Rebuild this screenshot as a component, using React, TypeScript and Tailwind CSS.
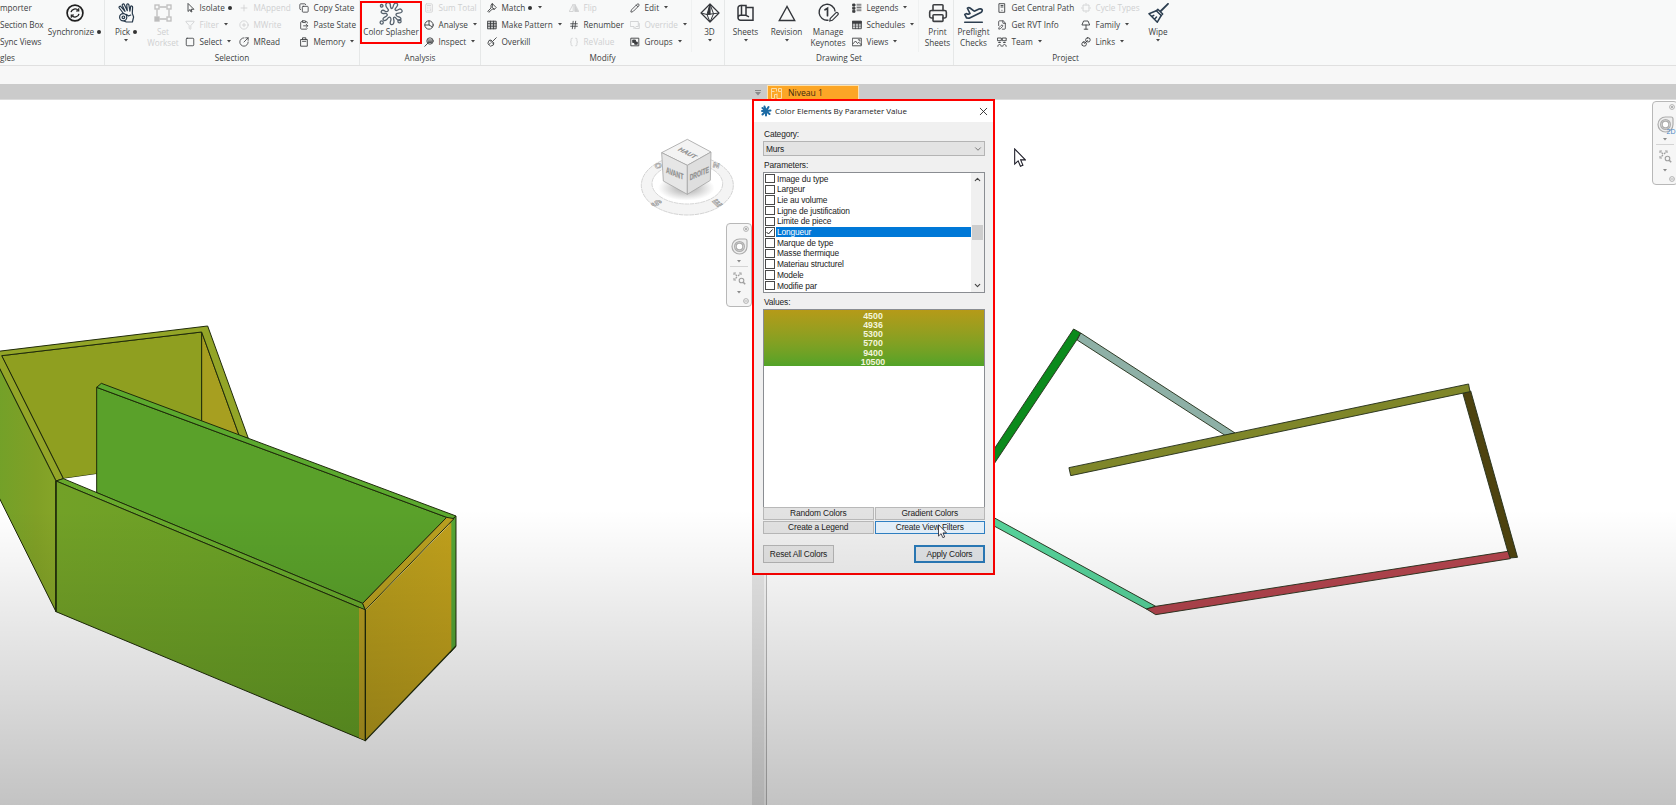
import React from "react";
import {
  Braces, Calculator, ClipboardPaste, Copy, Hash, Pencil, PlaneTakeoff, Plus, CirclePlus,
  CircleArrowOutUpRight, Filter, Square, Printer, FilePen, X, ChevronDown, ChevronUp,
} from "lucide-react";

type IconType = React.ComponentType<{ size?: number; strokeWidth?: number; className?: string }>;

/* Builds a 10px line icon that takes the same props as the lucide ones. */
const mini = (content: React.ReactNode): IconType =>
  function MiniIcon({ size = 10, className }) {
    return (
      <svg width={size} height={size} viewBox="0 0 10 10" fill="none" stroke="currentColor" strokeWidth=".9" strokeLinejoin="round" strokeLinecap="round" className={className}>
        {content}
      </svg>
    );
  };

const ArrowCursor = mini(<path d="M3 .8v7.700l2-1.900 1 2.400 1-.4-1-2.300h2.500z" />);
const MemoryIcon = mini(<><path d="M2 2.500h6.300v6.700H2zM3.500 2.500V.8h3.300v1.700" /><path d="M3.500 4.300h3.300" /></>);
const PieIcon = mini(<><circle cx="5" cy="5" r="4.200" /><path d="M5 .8V5l3.600 2M5 5H.8" /></>);
const InspectIcon = mini(<><circle cx="6" cy="4" r="3.200" /><path d="M3.700 6.300.8 9.300M4 3h4M4 4.300h4M4 5.500h3.500" /></>);
const MatchIcon = mini(<path d="M5.500.8 9.200 4.500 7.500 6.200H5.200L1.800 9.300.8 8.300 4 5V2.500zM5.500.8l-.3 3.700 2.300 1.700" />);
const PatternIcon = mini(<><path d="M.8 1.200h8.400v7.600H.8z" fill="currentColor" fillOpacity=".25" /><path d="M.8 3.700h8.400M.8 6.200h8.400M3.500 1.200v7.600M6.500 1.200v7.600" /></>);
const OverkillIcon = mini(<path d="M9.300.7 6.300 3.700M4.300 3.300l2.500 2.500-.5 2.300-2.800 1.100L.8 6.500 1.900 3.800zM2 7.500l1.500-1.500M3 3.500l3.300 3.300" />);
const FlipIcon = mini(<><path d="M4.200 1.500v7H.6z" /><path d="M5.800 1.500v7h3.600z" fill="currentColor" /></>);
const OverrideIcon = mini(<path d="M.7 1.500h7.600v5H6L4 8.700V6.500H.7zM5.500 8.500h3.800V3.500" />);
const GroupsIcon = mini(<><path d="M1.200 1.200h7.600v7.600H1.200z" /><path d="M3 3h2.500v2.500H3zM5 5h2.300v2.300H5z" fill="currentColor" /></>);
const LegendIcon = mini(<><path d="M1 1h2v2H1zM1 4.200h2v2H1zM1 7.300h2v2H1z" fill="currentColor" /><path d="M5 1.300h4M5 2.900h4M5 4.500h4M5 6.100h4M5 7.700h4" strokeWidth=".7" /></>);
const ScheduleIcon = mini(<><path d="M.7 1.300h8.600v7.400H.7z" /><path d="M.7 1.300h8.600v2H.7z" fill="currentColor" /><path d="M.7 5h8.600M.7 6.800h8.600M3.500 3v5.700M6.500 3v5.700" strokeWidth=".7" /></>);
const ViewsIcon = mini(<path d="M.7 1.200h8.600v7.600H.7zM.7 7l2.800-3 2 2.500 1.300-1.200 2.500 2.500M6.300 2.800h1.500v1.200" />);
const ServerIcon = mini(<path d="M2.300.7h5.400v8.600H2.300zM4 2.500h2M4 4h2M4.900 7.300h.1" />);
const TeamIcon = mini(<path d="M.8 1h3.500v2.700H.8zM5.700 1h3.500v2.700H5.700zM2.500 5.200v0M7.500 5.200v0M.8 9.300c0-2.600 3.500-2.600 3.500 0M5.700 9.300c0-2.600 3.500-2.600 3.500 0M1.600 5.500h1.800M6.500 5.500h1.800" />);
const CycleIcon = mini(<path d="M2 4V2h2M6 2h2v2M8 6v2H6M4 8H2V6M5 .5v2M5 7.500v2M.5 5h2M7.500 5h2" />);
const FamilyIcon = mini(<path d="M3 1h4l1.700 4H1.300zM5 5v4M3.200 9.200h3.600" />);
const LinkIcon = mini(<><rect x="4.700" y=".9" width="4.400" height="4" rx="1.700" transform="rotate(8 7 3)" /><rect x=".9" y="5" width="4.400" height="4" rx="1.700" transform="rotate(8 3 7)" /><path d="m3.500 6.500 3-3" /></>);

const Caret = ({ className = "" }: { className?: string }) => (
  <svg width="4" height="3" viewBox="0 0 4 3" className={`shrink-0 ${className}`}>
    <path d="M0 0h4L2 2.6z" fill="#444" />
  </svg>
);

const Dot = () => <span className="size-[4px] shrink-0 rounded-full bg-[#333]" />;

interface RowProps {
  icon: IconType;
  text: string;
  off?: boolean;
  arrow?: boolean;
  dot?: boolean;
}

function Row({ icon: Icon, text, off, arrow, dot }: RowProps) {
  return (
    <div className={`flex h-[17.2px] items-center ${off ? "text-[#cfd0d1]" : "text-[#3d3f42]"}`}>
      <Icon size={10} strokeWidth={2} className="mr-[4.5px] shrink-0" />
      <span>{text}</span>
      {dot && <span className="ml-[3px] flex"><Dot /></span>}
      {arrow && <Caret className={dot ? "ml-[6px]" : "ml-[5px]"} />}
    </div>
  );
}

function Column({ className, rows }: { className: string; rows: RowProps[] }) {
  return (
    <div className={`-mt-px shrink-0 ${className}`}>
      {rows.map((r) => <Row key={r.text} {...r} />)}
    </div>
  );
}

interface BigProps {
  className: string;
  icon: React.ReactNode;
  lines: string[];
  arrow?: boolean;
  dot?: boolean;
  off?: boolean;
}

function Big({ className, icon, lines, arrow, dot, off }: BigProps) {
  return (
    <div className={`flex shrink-0 flex-col items-center ${off ? "text-[#cfd0d1]" : "text-[#3d3f42]"} ${className}`}>
      <div className="flex h-[26px] items-center">{icon}</div>
      {lines.map((l) => (
        <div key={l} className="flex h-[11px] items-center gap-[3px]">
          <span>{l}</span>
          {dot && <Dot />}
        </div>
      ))}
      {arrow && <Caret className="mt-[2px]" />}
    </div>
  );
}

function Group({ className, title, children }: { className: string; title: string; children: React.ReactNode }) {
  return (
    <section className={`flex h-[65px] shrink-0 flex-col ${className}`}>
      <div className="flex h-[52px]">{children}</div>
      <div className="h-[12px] text-center leading-[11px] text-[#3d3f42]">{title}</div>
    </section>
  );
}

const SyncIcon = () => (
  <svg width="18" height="18" viewBox="0 0 18 18" fill="none" stroke="#1f1f1f" strokeWidth="1.7">
    <circle cx="9" cy="9" r="7.9" />
    <path d="M5 8.2A4.1 4.1 0 0 1 12.3 6.6M13 9.8A4.1 4.1 0 0 1 5.7 11.4" strokeWidth="1.3" />
    <path d="M12.7 4.3v2.7H10M5.3 13.7V11H8" strokeWidth="1.2" />
  </svg>
);

const HandIcon = () => (
  <svg width="17" height="20" viewBox="0 0 17 20" fill="none" stroke="#26384a" strokeWidth="1.200" strokeLinejoin="round" strokeLinecap="round">
    <path d="M5.500 10.500 1.300 5c-.8-1.400.9-2.400 1.800-1.200L7 8.300 4.300 2.500c-.4-1.700 1.500-2.100 2.100-.8l2.900 6L8.700 1.800c.1-1.400 2-1.300 2.200.1l1 6.200.7-4.300c.4-1.300 2-1 2 .3l-.3 6.300 1.300 3.600-1.200 5H8.300l-2.300-1" />
    <circle cx="5.200" cy="14.300" r="3.600" fill="#f8f9f9" />
    <circle cx="5.400" cy="14.300" r="1.300" />
    <path d="m8.500 11.500 2 1.500 2.300-1" />
  </svg>
);

const WorksetIcon = () => (
  <svg width="18" height="18" viewBox="0 0 18 18" fill="none" stroke="#bdbdbd" strokeWidth="1.3">
    <path d="M3 5.500v7M15 5.500v7M5.500 3h7M5.500 15h7" />
    <rect x="1" y="1" width="4" height="4" />
    <rect x="13" y="1" width="4" height="4" />
    <rect x="1" y="13" width="4" height="4" fill="#bdbdbd" />
    <rect x="13" y="13" width="4" height="4" />
  </svg>
);

const SplashIcon = () => (
  <svg width="24" height="25" viewBox="0 0 24 25" fill="none" stroke="#56626e" strokeWidth="1.300" strokeLinecap="round" strokeLinejoin="round">
    <path d="M9.500 9C8 6.500 6 5.500 7 3s4.200-1.500 4.300.6.200 3.900 1.500 3.900S14 5 15 3.200s4.200-1.200 3.500 1.200-3 3-2.400 4.400 2.500.5 4-.5 3.800 1 2.700 2.700-3.900.8-5.200 1.600-.3 2.500 1.500 3.100 3.500 1.300 2.500 2.900-2.800.8-3.800-.5-2.100-2.600-3-1.700.3 2.400.2 4.100-.9 3.300-2.500 3.100-1.500-2-.9-3.500.5-3.500-.9-3.900-1.900 1.200-2.900 2.300-3 1.500-3.600.3.500-2.300 2-3 2.500-1.500 1.900-2.600-1.600-1-3.200-.7-3-.7-2.600-2.100 2.300-1.500 3.500-.5S8.700 11.300 9.500 9z" />
    <circle cx="2.700" cy="21.500" r="1.600" />
    <circle cx="20.500" cy="20.300" r="1.600" />
    <circle cx="2.700" cy="4.800" r="1.300" />
  </svg>
);

const OctaIcon = () => (
  <svg width="20" height="20" viewBox="0 0 20 20" fill="none" stroke="#33363b" strokeWidth="1.2" strokeLinejoin="round">
    <path d="M10 1 1 10l9 9 9-9z" />
    <path d="M10 1 7 11.500 10 19M1 10l6 1.500 12-1.500M10 1l3.500 9.800L10 19" strokeWidth="1" />
    <path d="M10 2 8 11l2 .2z" fill="#33363b" />
  </svg>
);

const SheetsIcon = () => (
  <svg width="17" height="18" viewBox="0 0 17 18" fill="none" stroke="#33363b" strokeWidth="1.5">
    <path d="M4.500 1.500H9v9.800H4.500" />
    <path d="M9 3.500h7v12.800H3.500a2.500 2.500 0 0 1-2.500-2.500V4a2.500 2.500 0 0 1 2.500-2.500h1v9.800h-1A2.500 2.500 0 0 0 1 13.800M9 11.300l3 1.500" />
  </svg>
);

const TriangleIcon = () => (
  <svg width="18" height="17" viewBox="0 0 18 17" fill="none" stroke="#33363b" strokeWidth="1.4">
    <path d="M9 1.500 1.300 15.500h15.400z" />
  </svg>
);

const KeynoteIcon = () => (
  <svg width="21" height="20" viewBox="0 0 21 20" fill="none" stroke="#33363b" strokeWidth="1.400" strokeLinecap="round">
    <path d="M10 17.200A8 8 0 1 1 17 8" />
    <path d="M7 6.800 9.500 5.300V12.700" strokeWidth="1.700" />
    <path d="m12.300 15.300 5.500-5.500a1.400 1.400 0 0 1 2 2l-5.500 5.500-2.500.7z" strokeWidth="1.200" />
  </svg>
);

const WipeIcon = () => (
  <svg width="21" height="20" viewBox="0 0 21 20" fill="none" stroke="#2c3e50" strokeWidth="1.500" strokeLinejoin="round" strokeLinecap="round">
    <path d="m20 .8-7.200 7.200" strokeWidth="1.800" />
    <path d="M9.800 6.300 14.700 11l-1.500 1.500L8.300 7.800z" />
    <path d="M8.300 7.800 1 10.800l8.300 8.400 3.900-6.700M3.800 13.500l2-1.200M6.500 16.300l2-2.200" />
  </svg>
);

function Ribbon() {
  return (
    <header className="flex h-[66px] shrink-0 overflow-hidden border-b border-[#e0e0e0] bg-[#f8f9f9] font-['Open_Sans',sans-serif] text-[8.2px] leading-[11px] whitespace-nowrap">
      <section className="flex h-[65px] w-[105px] shrink-0 flex-col border-r border-[#e6e8e8] text-[#3d3f42]">
        <div className="flex h-[52px]">
          <div className="-mt-px w-[45px] shrink-0">
            <div className="flex h-[17.2px] items-center">mporter</div>
            <div className="flex h-[17.2px] items-center tracking-[-0.1px]">Section Box</div>
            <div className="flex h-[17.2px] items-center">Sync Views</div>
          </div>
          <Big className="w-[59px]" icon={<SyncIcon />} lines={["Synchronize"]} dot />
        </div>
        <div className="h-[12px] leading-[11px]">gles</div>
      </section>

      <Group className="w-[255px] border-r border-[#e6e8e8]" title="Selection">
        <Big className="w-[42px]" icon={<HandIcon />} lines={["Pick"]} dot arrow />
        <Big className="w-[32px]" icon={<WorksetIcon />} lines={["Set", "Workset"]} off />
        <Column className="ml-[6px] w-[54px]" rows={[
          { icon: ArrowCursor, text: "Isolate", dot: true },
          { icon: Filter, text: "Filter", off: true, arrow: true },
          { icon: Square, text: "Select", arrow: true },
        ]} />
        <Column className="w-[60px]" rows={[
          { icon: Plus, text: "MAppend", off: true },
          { icon: CirclePlus, text: "MWrite", off: true },
          { icon: CircleArrowOutUpRight, text: "MRead" },
        ]} />
        <Column className="" rows={[
          { icon: Copy, text: "Copy State" },
          { icon: ClipboardPaste, text: "Paste State" },
          { icon: MemoryIcon, text: "Memory", arrow: true },
        ]} />
      </Group>

      <Group className="w-[121px] border-r border-[#e6e8e8]" title="Analysis">
        <div className="mt-px h-[43px] w-[62px] shrink-0 overflow-hidden border-2 border-[#fd0100]">
          <Big className="-mt-[3px] -ml-[2px] w-[62px]" icon={<SplashIcon />} lines={["Color Splasher"]} />
        </div>
        <Column className="ml-[2px]" rows={[
          { icon: Calculator, text: "Sum Total", off: true },
          { icon: PieIcon, text: "Analyse", arrow: true },
          { icon: InspectIcon, text: "Inspect", arrow: true },
        ]} />
      </Group>

      <Group className="w-[244px] border-r border-[#e6e8e8]" title="Modify">
        <Column className="ml-[6px] w-[82px]" rows={[
          { icon: MatchIcon, text: "Match", dot: true, arrow: true },
          { icon: PatternIcon, text: "Make Pattern", arrow: true },
          { icon: OverkillIcon, text: "Overkill" },
        ]} />
        <Column className="w-[61px]" rows={[
          { icon: FlipIcon, text: "Flip", off: true },
          { icon: Hash, text: "Renumber" },
          { icon: Braces, text: "ReValue", off: true },
        ]} />
        <Column className="w-[62px] border-r border-[#eff1f1]" rows={[
          { icon: Pencil, text: "Edit", arrow: true },
          { icon: OverrideIcon, text: "Override", off: true, arrow: true },
          { icon: GroupsIcon, text: "Groups", arrow: true },
        ]} />
        <Big className="w-[35px]" icon={<OctaIcon />} lines={["3D"]} arrow />
      </Group>

      <Group className="w-[229px] border-r border-[#e6e8e8]" title="Drawing Set">
        <Big className="w-[41px]" icon={<SheetsIcon />} lines={["Sheets"]} arrow />
        <Big className="w-[41px]" icon={<TriangleIcon />} lines={["Revision"]} arrow />
        <Big className="w-[42px]" icon={<KeynoteIcon />} lines={["Manage", "Keynotes"]} />
        <Column className="ml-[3px] w-[67px] border-r border-[#eff1f1]" rows={[
          { icon: LegendIcon, text: "Legends", arrow: true },
          { icon: ScheduleIcon, text: "Schedules", arrow: true },
          { icon: ViewsIcon, text: "Views", arrow: true },
        ]} />
        <Big className="w-[37px]" icon={<Printer size={20} strokeWidth={1.9} />} lines={["Print", "Sheets"]} />
      </Group>

      <Group className="w-[223px]" title="Project">
        <Big
          className="w-[39px]"
          icon={<PlaneTakeoff size={21} strokeWidth={1.9} className="text-[#2c3e50]" />}
          lines={["Preflight", "Checks"]}
        />
        <Column className="ml-[4px] w-[84px]" rows={[
          { icon: ServerIcon, text: "Get Central Path" },
          { icon: FilePen, text: "Get RVT Info" },
          { icon: TeamIcon, text: "Team", arrow: true },
        ]} />
        <Column className="w-[55px]" rows={[
          { icon: CycleIcon, text: "Cycle Types", off: true },
          { icon: FamilyIcon, text: "Family", arrow: true },
          { icon: LinkIcon, text: "Links", arrow: true },
        ]} />
        <Big className="w-[44px]" icon={<WipeIcon />} lines={["Wipe"]} arrow />
      </Group>
    </header>
  );
}

function TabStrip() {
  return (
    <div className="flex h-[16px] shrink-0 items-end bg-[#cbcbcb]">
      <div className="flex h-full w-[767px] items-center justify-end border-b border-[#dcdcdc] pt-[2px] pr-[6px]">
        <svg width="6" height="6" viewBox="0 0 6 6">
          <path d="M0 .5h6" stroke="#888" />
          <path d="M0 2h6L3 5.500z" fill="#888" />
        </svg>
      </div>
      <div className="flex h-[15px] w-[92px] items-center gap-[6px] border border-b-0 border-[#fde2b0] bg-[#fca626] pl-[3px] font-['Open_Sans',sans-serif] text-[8.6px] leading-none text-[#3d2c10]">
        <svg width="11" height="11" viewBox="0 0 11 11" fill="none" stroke="#fbdca6" strokeWidth="1">
          <path d="M.5.5v10h3v-4M.5 3.500h3M.5.500h5v3M6 5.500v5h4.500V.5H7.500v3h3M3.500 6.500H6" />
        </svg>
        <span>Niveau 1</span>
      </div>
      <div className="h-full flex-1 border-b border-[#dcdcdc]" />
    </div>
  );
}

function NavBar({ className, twoD }: { className: string; twoD?: boolean }) {
  return (
    <div className={`absolute flex h-[84px] w-[26px] flex-col items-center rounded-[4px] border border-[#b8b8b8] bg-[#f6f6f6] pt-[2px] ${className}`}>
      <svg width="6" height="6" viewBox="0 0 6 6" className="mr-[2px] self-end" fill="none" stroke="#aaa" strokeWidth=".9">
        <circle cx="3" cy="3" r="2.400" /><path d="m2 2 2 2M4 2 2 4" />
      </svg>
      <div className="relative mt-[6px]">
        <svg width="17" height="17" viewBox="0 0 17 17" fill="none" stroke="#adadad" strokeWidth="1.200">
          <path d="M8.500 1h5.500a2 2 0 0 1 2 2v5.500A7.500 7.500 0 1 1 8.500 1z" fill="#eee" />
          <circle cx="8.500" cy="8.500" r="4.900" /><circle cx="8.500" cy="8.500" r="3.300" fill="#fff" />
        </svg>
        {twoD && (
          <span className="absolute -right-[2px] -bottom-[2px] font-['Liberation_Sans',sans-serif] text-[7px] leading-none text-[#4a88c4]">2D</span>
        )}
      </div>
      <Caret className="mt-[5px] opacity-60" />
      <div className="mt-[3px] h-px w-[18px] bg-[#d4d4d4]" />
      <svg width="13" height="13" viewBox="0 0 13 13" className="mt-[5px]" fill="none" stroke="#a0a0a0" strokeWidth="1.100">
        <path d="M1 3V1h2M6 1h2v2M1 6v2h2M2.500 2.500l1.500 1.500M6.500 2.500 5 4M2.500 6.500 4 5" />
        <circle cx="8.500" cy="8.500" r="2.300" /><path d="m10.200 10.200 2 2" strokeWidth="1.600" />
      </svg>
      <Caret className="mt-[6px] opacity-60" />
      <svg width="6" height="6" viewBox="0 0 6 6" className="mt-auto mr-[2px] mb-[2px] self-end" fill="none" stroke="#aaa" strokeWidth=".9">
        <circle cx="3" cy="3" r="2.400" /><path d="M1.500 3h3" />
      </svg>
    </div>
  );
}

function ViewCube() {
  return (
    <svg width="100" height="82" viewBox="55 50 300 246" className="absolute top-[37px] left-[638px] font-['Liberation_Sans',sans-serif]">
      <defs>
        <radialGradient id="shadow">
          <stop offset="0" stopColor="#888" stopOpacity=".8" />
          <stop offset="1" stopColor="#999" stopOpacity="0" />
        </radialGradient>
      </defs>
      <ellipse cx="203" cy="195" rx="138" ry="89" fill="#f4f4f4" stroke="#cacaca" strokeWidth="2.500" strokeDasharray="14 2" />
      <ellipse cx="203" cy="190" rx="106" ry="61" fill="#fff" stroke="#cfcfcf" strokeWidth="2.500" strokeDasharray="14 2" />
      <ellipse cx="200" cy="203" rx="85" ry="38" fill="url(#shadow)" />
      <g fill="#e8e8e8" stroke="#9c9c9c" strokeWidth="2.200" fontSize="30" fontWeight="700" textAnchor="middle">
        <text transform="translate(101 255) rotate(25) skewX(-30)">S</text>
        <text transform="translate(300 256) rotate(-25) skewX(20)">E</text>
        <text transform="translate(117 143) rotate(-12) scale(.9 .7)">O</text>
        <text transform="translate(288 142) rotate(12) scale(.9 .7)">N</text>
      </g>
      <g stroke="#a6a6a6" strokeWidth="2.500" strokeLinejoin="round">
        <path d="M203 57 274 95 203 135 126 97z" fill="#f3f3f3" />
        <path d="M126 97 203 135V222L131 182z" fill="#e6e6e6" />
        <path d="M203 135 274 95 272 180 203 222z" fill="#dedede" />
      </g>
      <g fill="#8f8f8f" stroke="#8f8f8f" strokeWidth=".6" fontSize="22" fontWeight="700" textAnchor="middle">
        <text transform="matrix(.82 .42 -.8 .5 198 102)">HAUT</text>
        <text transform="matrix(.72 .3 0 1.150 165 168)">AVANT</text>
        <text transform="matrix(.7 -.3 0 1.150 239 168)">DROITE</text>
      </g>
    </svg>
  );
}

function ModelView() {
  return (
    <div className="relative h-full w-[752px] shrink-0 overflow-hidden bg-white">
      <svg width="752" height="705" viewBox="0 0 752 705" className="block">
        <defs>
          <linearGradient id="lf" x1="0" y1="0" x2="1" y2="0">
            <stop offset="0" stopColor="#70a129" /><stop offset=".7" stopColor="#80a026" /><stop offset="1" stopColor="#86a528" />
          </linearGradient>
          <linearGradient id="ff" x1="0" y1="0" x2="1" y2="0">
            <stop offset="0" stopColor="#72a127" /><stop offset="1" stopColor="#66a125" />
          </linearGradient>
          <linearGradient id="yf" x1="0" y1="0" x2="1" y2="0">
            <stop offset="0" stopColor="#b69c1c" /><stop offset="1" stopColor="#c0a01c" />
          </linearGradient>
        </defs>
        <g transform="translate(0 210) scale(.33333)" stroke="#1f2a0a" strokeWidth="3" strokeLinejoin="round">
          <path d="M5 137 605 66V450L290 492 190 506z" fill="#8f9f20" />
          <path d="M605 66 718 378 605 345z" fill="#a79f20" />
          <path d="M-30 127 623 48 745 385 718 378 605 66 5 137 190 506 168 513-30 118z" fill="#93a527" />
          <path d="M-30 118 168 513V905L-30 508z" fill="url(#lf)" />
          <path d="M190 506 290 492V548z" fill="#fff" stroke="none" />
          <path d="M290 232 1340 622 1088 880 290 548z" fill="#5aa12a" />
          <path d="M290 232 304 220 1368 618 1352 632 1340 622z" fill="#5ba92e" />
          <path d="M1350 636 1368 618V1008L1350 1028z" fill="#55a535" />
          <path d="M168 513 190 506 1088 880 1096 900z" fill="#68aa2c" />
          <path d="M168 513 1096 900V1292L168 905z" fill="url(#ff)" />
          <path d="M1077 893 1095 901V1290L1077 1283z" fill="#b49c22" stroke="none" />
          <path d="M1088 880 1340 622 1362 626 1096 900z" fill="#b99f20" />
          <path d="M1097 901 1354 637V1022L1097 1290z" fill="url(#yf)" stroke="none" />
          <path d="M1096 900V1292L1368 1008" fill="none" strokeWidth="4" />
          <path d="M168 905V513" strokeWidth="4" />
        </g>
      </svg>
      <ViewCube />
      <NavBar className="top-[123px] left-[726px]" />
    </div>
  );
}

function PlanView() {
  return (
    <div className="relative h-full min-w-0 flex-1 overflow-hidden bg-white">
      <svg width="909" height="705" viewBox="0 0 909 705" className="block">
        <g transform="translate(213 210) scale(.35714 .33333)" stroke="#26301c" strokeWidth="2.700" strokeLinejoin="round">
          <path d="M262 57 282 69 272 88 0 525V481z" fill="#0b8a1c" />
          <path d="M282 69 714 369 686 376 272 90z" fill="#8eb0a6" />
          <path d="M1352 250 1374 243 1505 742 1483 744z" fill="#4e430f" />
          <path d="M249 473 1368 222 1372 245 254 497z" fill="#7f8629" />
          <path d="M0 600 492 889 466 897 0 625z" fill="#57d39b" />
          <path d="M466 897 492 889 1478 724 1485 746 492 914z" fill="#b4454e" />
        </g>
      </svg>
      <NavBar className="top-[1px] left-[885px]" twoD />
      <Pointer className="absolute top-[48px] left-[247px]" width={12} />
    </div>
  );
}

function Pointer({ className, width }: { className: string; width: number }) {
  return (
    <svg width={width} height={width * 1.6} viewBox="0 0 12.500 20" className={className}>
      <path d="M.7 1v15.800l3.600-3.400 2.400 5.600 2.600-1.100-2.400-5.500h4.900z" fill="#fff" stroke="#1b1b26" strokeWidth="1.100" />
    </svg>
  );
}

const PARAMETERS = [
  "Image du type", "Largeur", "Lie au volume", "Ligne de justification", "Limite de piece", "Longueur",
  "Marque de type", "Masse thermique", "Materiau structurel", "Modele", "Modifie par",
];
const VALUES = ["4500", "4936", "5300", "5700", "9400", "10500"];

function Dialog() {
  return (
    <div className="absolute top-[99px] left-[752px] flex h-[476px] w-[243px] flex-col border-2 border-[#fd0100] bg-[#f0f0f0] font-['Liberation_Sans',sans-serif] text-[8.4px] leading-[10px] tracking-[-0.14px] text-[#222] whitespace-nowrap">
      <div className="flex h-[21px] shrink-0 items-center bg-white pr-[3px] pb-px pl-[6px] font-['Open_Sans',sans-serif] text-[8px] tracking-normal">
        <svg width="12" height="12" viewBox="0 0 24 24" className="mr-[3px]" fill="none" stroke="#1d6ba5" strokeLinecap="round">
          <circle cx="12" cy="12" r="4.500" fill="#1d6ba5" stroke="none" />
          <path d="M12 12 9 3M12 12l5-8M12 12l9-1M12 12l7 6M12 12l0 9M12 12l-7 7M12 12l-8 0M12 12 5 6" strokeWidth="4" />
        </svg>
        <span className="flex-1">Color Elements By Parameter Value</span>
        <X size={13} strokeWidth={1.600} />
      </div>
      <div className="flex min-h-0 flex-1 flex-col pr-[8px] pl-[9px]">
        <div className="mt-[7px] ml-px">Category:</div>
        <div className="mt-[2px] flex h-[15px] shrink-0 items-center justify-between border border-[#b4b4b4] bg-[#e3e3e3] pr-px pl-[2px]">
          <span>Murs</span>
          <ChevronDown size={10} strokeWidth={1.800} className="text-[#555]" />
        </div>
        <div className="mt-[4px] ml-px">Parameters:</div>
        <div className="mt-[2px] flex h-[121px] shrink-0 border border-[#8a8d92] bg-white">
          <div className="flex-1 pt-[0.3px] pl-px">
            {PARAMETERS.map((p) => {
              const on = p === "Longueur";
              return (
                <div key={p} className="flex h-[10.7px] items-center">
                  <span className="flex size-[9.5px] shrink-0 items-center justify-center border border-[#4a4a4a] bg-white">
                    {on && (
                      <svg width="7" height="6" viewBox="0 0 7 6" fill="none" stroke="#222"><path d="m.5 3 2 2 4-4.500" /></svg>
                    )}
                  </span>
                  <span className={`ml-px flex h-full flex-1 items-center pl-[1.5px] ${on ? "bg-[#0078d7] text-white" : ""}`}>{p}</span>
                </div>
              );
            })}
          </div>
          <div className="flex w-[13px] flex-col items-center justify-between bg-[#f0f0f0] py-[2px]">
            <ChevronUp size={9} strokeWidth={3} className="text-[#444]" />
            <div className="h-[15px] w-[11px] bg-[#cdcdcd]" />
            <ChevronDown size={9} strokeWidth={3} className="text-[#444]" />
          </div>
        </div>
        <div className="mt-[4px] ml-px">Values:</div>
        <div className="mt-[2px] h-[198px] shrink-0 border border-b-0 border-[#8a8d92] bg-white">
          <div className="h-[56px] overflow-hidden bg-gradient-to-b from-[#b59a18] to-[#52a328] pt-[1.5px] pr-[2px] text-center text-[8.800px] font-bold tracking-normal text-[#f4f5dc]">
            {VALUES.map((v) => <div key={v} className="h-[9.25px] leading-[9.25px]">{v}</div>)}
          </div>
        </div>
        <div className="grid shrink-0 grid-cols-2 gap-x-[1px] gap-y-px text-center leading-[11px]">
          <div className="h-[13px] border border-[#b8b8b8] bg-[#e2e2e2]">Random Colors</div>
          <div className="h-[13px] border border-[#b8b8b8] bg-[#e2e2e2]">Gradient Colors</div>
          <div className="h-[13px] border border-[#b8b8b8] bg-[#e2e2e2]">Create a Legend</div>
          <div className="h-[13px] border border-[#2f80c4] bg-[#e5f1fb]">Create View Filters</div>
        </div>
        <div className="mt-[11px] flex shrink-0 justify-between text-center leading-[16px]">
          <div className="h-[18px] w-[71px] border border-[#b4b4b4] bg-[#e2e2e2]">Reset All Colors</div>
          <div className="h-[18px] w-[71px] border-2 border-[#2a7ab8] bg-[#e0e3e6] leading-[14px]">Apply Colors</div>
        </div>
      </div>
      <Pointer className="absolute top-[423px] left-[184px]" width={9} />
    </div>
  );
}

export default function App() {
  return (
    <div className="relative flex h-[805px] w-[1676px] flex-col overflow-hidden bg-white">
      <Ribbon />
      <div className="h-[18px] shrink-0 bg-[#f7f7f7]" />
      <TabStrip />
      <main className="flex min-h-0 flex-1">
        <ModelView />
        <div className="w-[12px] shrink-0 bg-[#e6e6e6]" />
        <div className="w-[3px] shrink-0 border-r border-[#b8b8b8] bg-[#f6f6f6]" />
        <PlanView />
      </main>
      <Dialog />
      <div className="pointer-events-none absolute inset-x-0 bottom-0 h-[295px] bg-gradient-to-b from-black/0 to-black/[0.235]" />
    </div>
  );
}
